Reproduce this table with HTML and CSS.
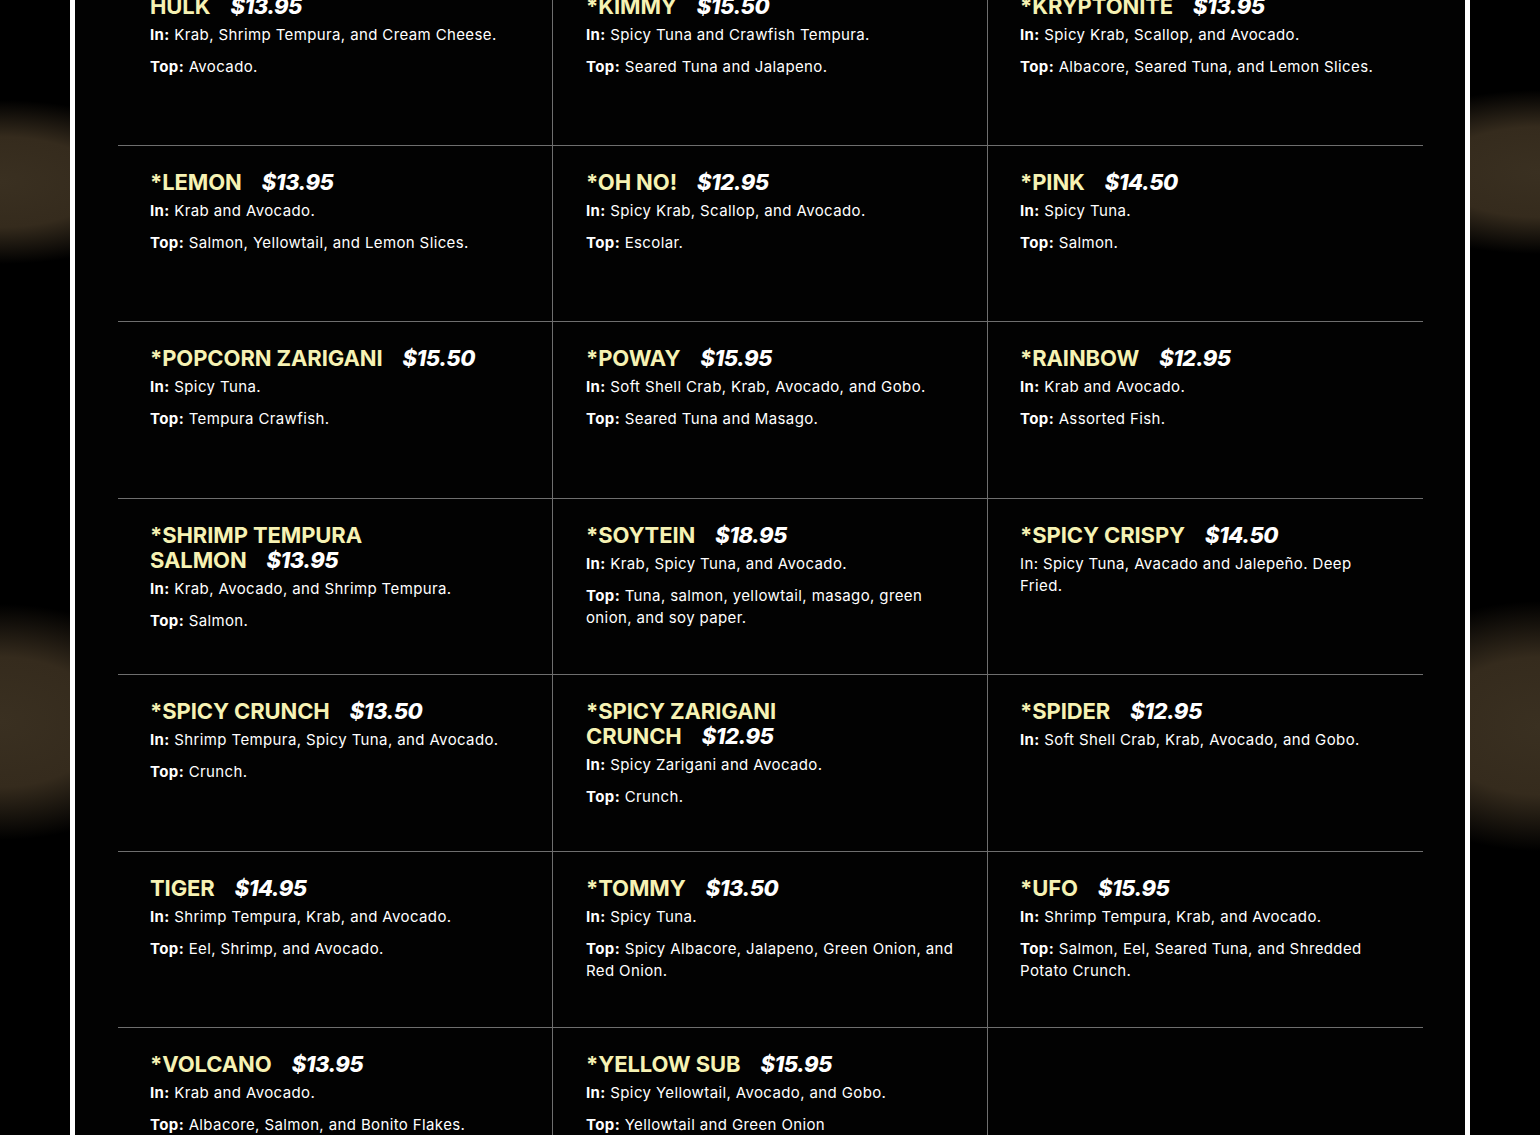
FILE: index.html
```html
<!DOCTYPE html>
<html lang="en">
<head>
<meta charset="utf-8">
<title>Specialty Rolls</title>
<link rel="stylesheet" href="styles.css">
</head>
<body>
<div class="frame">
  <div class="menu">
    <div class="item">
      <h3 class="name">HULK<span class="price">$13.95</span></h3>
      <p><b>In:</b> Krab, Shrimp Tempura, and Cream Cheese.</p>
      <p><b>Top:</b> Avocado.</p>
    </div>
    <div class="item">
      <h3 class="name">*KIMMY<span class="price">$15.50</span></h3>
      <p><b>In:</b> Spicy Tuna and Crawfish Tempura.</p>
      <p><b>Top:</b> Seared Tuna and Jalapeno.</p>
    </div>
    <div class="item">
      <h3 class="name">*KRYPTONITE<span class="price">$13.95</span></h3>
      <p><b>In:</b> Spicy Krab, Scallop, and Avocado.</p>
      <p><b>Top:</b> Albacore, Seared Tuna, and Lemon Slices.</p>
    </div>

    <div class="item">
      <h3 class="name">*LEMON<span class="price">$13.95</span></h3>
      <p><b>In:</b> Krab and Avocado.</p>
      <p><b>Top:</b> Salmon, Yellowtail, and Lemon Slices.</p>
    </div>
    <div class="item">
      <h3 class="name">*OH NO!<span class="price">$12.95</span></h3>
      <p><b>In:</b> Spicy Krab, Scallop, and Avocado.</p>
      <p><b>Top:</b> Escolar.</p>
    </div>
    <div class="item">
      <h3 class="name">*PINK<span class="price">$14.50</span></h3>
      <p><b>In:</b> Spicy Tuna.</p>
      <p><b>Top:</b> Salmon.</p>
    </div>

    <div class="item">
      <h3 class="name">*POPCORN ZARIGANI<span class="price">$15.50</span></h3>
      <p><b>In:</b> Spicy Tuna.</p>
      <p><b>Top:</b> Tempura Crawfish.</p>
    </div>
    <div class="item">
      <h3 class="name">*POWAY<span class="price">$15.95</span></h3>
      <p><b>In:</b> Soft Shell Crab, Krab, Avocado, and Gobo.</p>
      <p><b>Top:</b> Seared Tuna and Masago.</p>
    </div>
    <div class="item">
      <h3 class="name">*RAINBOW<span class="price">$12.95</span></h3>
      <p><b>In:</b> Krab and Avocado.</p>
      <p><b>Top:</b> Assorted Fish.</p>
    </div>

    <div class="item">
      <h3 class="name">*SHRIMP TEMPURA<br>SALMON<span class="price">$13.95</span></h3>
      <p><b>In:</b> Krab, Avocado, and Shrimp Tempura.</p>
      <p><b>Top:</b> Salmon.</p>
    </div>
    <div class="item">
      <h3 class="name">*SOYTEIN<span class="price">$18.95</span></h3>
      <p><b>In:</b> Krab, Spicy Tuna, and Avocado.</p>
      <p><b>Top:</b> Tuna, salmon, yellowtail, masago, green onion, and soy paper.</p>
    </div>
    <div class="item">
      <h3 class="name">*SPICY CRISPY<span class="price">$14.50</span></h3>
      <p>In: Spicy Tuna, Avacado and Jalepeño. Deep Fried.</p>
    </div>

    <div class="item">
      <h3 class="name">*SPICY CRUNCH<span class="price">$13.50</span></h3>
      <p><b>In:</b> Shrimp Tempura, Spicy Tuna, and Avocado.</p>
      <p><b>Top:</b> Crunch.</p>
    </div>
    <div class="item">
      <h3 class="name">*SPICY ZARIGANI<br>CRUNCH<span class="price">$12.95</span></h3>
      <p><b>In:</b> Spicy Zarigani and Avocado.</p>
      <p><b>Top:</b> Crunch.</p>
    </div>
    <div class="item">
      <h3 class="name">*SPIDER<span class="price">$12.95</span></h3>
      <p><b>In:</b> Soft Shell Crab, Krab, Avocado, and Gobo.</p>
    </div>

    <div class="item">
      <h3 class="name">TIGER<span class="price">$14.95</span></h3>
      <p><b>In:</b> Shrimp Tempura, Krab, and Avocado.</p>
      <p><b>Top:</b> Eel, Shrimp, and Avocado.</p>
    </div>
    <div class="item">
      <h3 class="name">*TOMMY<span class="price">$13.50</span></h3>
      <p><b>In:</b> Spicy Tuna.</p>
      <p><b>Top:</b> Spicy Albacore, Jalapeno, Green Onion, and Red Onion.</p>
    </div>
    <div class="item">
      <h3 class="name">*UFO<span class="price">$15.95</span></h3>
      <p><b>In:</b> Shrimp Tempura, Krab, and Avocado.</p>
      <p><b>Top:</b> Salmon, Eel, Seared Tuna, and Shredded Potato Crunch.</p>
    </div>

    <div class="item">
      <h3 class="name">*VOLCANO<span class="price">$13.95</span></h3>
      <p><b>In:</b> Krab and Avocado.</p>
      <p><b>Top:</b> Albacore, Salmon, and Bonito Flakes.</p>
    </div>
    <div class="item">
      <h3 class="name">*YELLOW SUB<span class="price">$15.95</span></h3>
      <p><b>In:</b> Spicy Yellowtail, Avocado, and Gobo.</p>
      <p><b>Top:</b> Yellowtail and Green Onion</p>
    </div>
    <div class="item empty"></div>
  </div>
</div>
</body>
</html>
```

FILE: styles.css
```css
html, body {
  margin: 0;
  padding: 0;
}

body {
  background-color: #000;
  background-image:
    radial-gradient(ellipse 190px 82px at 0px 182px, #3a3021 0%, #352b1d 55%, rgba(30,24,16,0) 100%),
    radial-gradient(ellipse 190px 118px at 0px 722px, #3a3021 0%, #352b1d 55%, rgba(30,24,16,0) 100%),
    radial-gradient(ellipse 190px 82px at 1540px 172px, #3a3021 0%, #352b1d 55%, rgba(30,24,16,0) 100%),
    radial-gradient(ellipse 190px 125px at 1540px 726px, #3a3021 0%, #352b1d 55%, rgba(30,24,16,0) 100%);
  background-repeat: no-repeat;
  font-family: "Inter", "Liberation Sans", sans-serif;
  color: #fff;
  min-height: 1135px;
  overflow: hidden;
}

.frame {
  width: 1400px;
  margin: 0 auto;
  border-left: 5px solid #fff;
  border-right: 5px solid #fff;
  background: #020202;
  padding: 0 42px 0 43px;
  box-sizing: border-box;
  min-height: 1135px;
}

.menu {
  display: grid;
  grid-template-columns: repeat(3, 1fr);
  grid-auto-rows: 176.4px;
  margin-top: -30.4px;
}

.item {
  box-sizing: border-box;
  padding: 24px 32px 0 32px;
  border-bottom: 1px solid #6e6e6e;
}

.item:nth-child(3n+2) {
  padding-left: 33px;
  padding-right: 31px;
}

.item:nth-child(3n+1),
.item:nth-child(3n+2) {
  border-right: 1px solid #6e6e6e;
}

.name {
  margin: 0 0 5px;
  font-size: 22px;
  line-height: 25px;
  font-weight: 700;
  color: #f6f2b3;
  letter-spacing: -0.1px;
}

.price {
  margin-left: 20px;
  color: #fff;
  font-style: italic;
  font-weight: 800;
  letter-spacing: -0.5px;
}

.item p {
  margin: 0 0 10px;
  font-size: 15px;
  line-height: 22px;
  font-weight: 400;
  letter-spacing: 0.38px;
}

.item p b {
  font-weight: 700;
}
```
